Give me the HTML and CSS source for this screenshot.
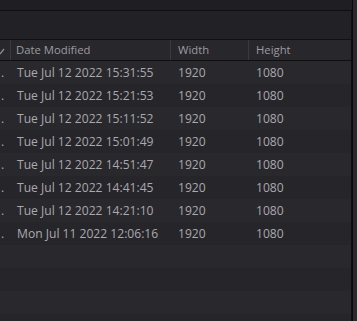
FILE: index.html
```html
<!DOCTYPE html>
<html lang="en">
<head>
    <meta charset="UTF-8">
    <title>Media Pool - List View</title>
    <link rel="stylesheet" href="styles.css">
</head>
<body>
    <div class="window">
        <div class="panel">
            <div class="topbar"></div>
            <div class="toolbar"></div>
            <div class="list">
                <div class="list-head">
                    <div class="cell col-clip">
                        <svg class="sort-icon" width="10" height="10" viewBox="0 0 10 10">
                            <path d="M1 8 L5 3" stroke="#8e8d93" stroke-width="1.3" fill="none"/>
                        </svg>
                    </div>
                    <div class="cell col-date">Date Modified</div>
                    <div class="cell col-width">Width</div>
                    <div class="cell col-height">Height</div>
                </div>
                <div class="list-body">
                    <div class="row">
                        <div class="cell col-clip">.</div>
                        <div class="cell col-date">Tue Jul 12 2022 15:31:55</div>
                        <div class="cell col-width">1920</div>
                        <div class="cell col-height">1080</div>
                    </div>
                    <div class="row">
                        <div class="cell col-clip">.</div>
                        <div class="cell col-date">Tue Jul 12 2022 15:21:53</div>
                        <div class="cell col-width">1920</div>
                        <div class="cell col-height">1080</div>
                    </div>
                    <div class="row">
                        <div class="cell col-clip">.</div>
                        <div class="cell col-date">Tue Jul 12 2022 15:11:52</div>
                        <div class="cell col-width">1920</div>
                        <div class="cell col-height">1080</div>
                    </div>
                    <div class="row">
                        <div class="cell col-clip">.</div>
                        <div class="cell col-date">Tue Jul 12 2022 15:01:49</div>
                        <div class="cell col-width">1920</div>
                        <div class="cell col-height">1080</div>
                    </div>
                    <div class="row">
                        <div class="cell col-clip">.</div>
                        <div class="cell col-date">Tue Jul 12 2022 14:51:47</div>
                        <div class="cell col-width">1920</div>
                        <div class="cell col-height">1080</div>
                    </div>
                    <div class="row">
                        <div class="cell col-clip">.</div>
                        <div class="cell col-date">Tue Jul 12 2022 14:41:45</div>
                        <div class="cell col-width">1920</div>
                        <div class="cell col-height">1080</div>
                    </div>
                    <div class="row">
                        <div class="cell col-clip">.</div>
                        <div class="cell col-date">Tue Jul 12 2022 14:21:10</div>
                        <div class="cell col-width">1920</div>
                        <div class="cell col-height">1080</div>
                    </div>
                    <div class="row">
                        <div class="cell col-clip">.</div>
                        <div class="cell col-date">Mon Jul 11 2022 12:06:16</div>
                        <div class="cell col-width">1920</div>
                        <div class="cell col-height">1080</div>
                    </div>
                </div>
            </div>
        </div>
        <div class="side-strip"></div>
    </div>
</body>
</html>
```
FILE: styles.css
```css
* {
    margin: 0;
    padding: 0;
    box-sizing: border-box;
}
html, body {
    height: 100%;
}
body {
    background-color: #1f1e23;
    font-family: "Open Sans", "Noto Sans", sans-serif;
    font-size: 12.1px;
    color: #aaa9ae;
}
.window {
    display: flex;
    height: 100%;
}
.panel {
    width: 352px;
    display: flex;
    flex-direction: column;
}
.topbar {
    height: 10px;
    background-color: #1f1e23;
}
.toolbar {
    height: 29px;
    background-color: #222126;
    border-top: 1px solid #0f0f12;
    border-right: 1px solid #0f0f12;
}
.list {
    flex: 1;
    display: flex;
    flex-direction: column;
    border-top: 1px solid #111114;
    border-right: 1px solid #0f0f12;
    background-color: #28272c;
}
.list-head {
    display: flex;
    height: 21px;
    background-color: #28272c;
    border-bottom: 1px solid #0f0f12;
    color: #9c9ba1;
    font-size: 11.3px;
}
.list-head .cell {
    border-right: 1px solid #3b3a40;
    line-height: 20px;
}
.list-head .col-height {
    border-right: none;
}
.list-body {
    flex: 1;
    background: repeating-linear-gradient(#29282d 0, #29282d 23px, #26252a 23px, #26252a 46px);
}
.row {
    display: flex;
    height: 23px;
    line-height: 23px;
}
.cell {
    white-space: nowrap;
    overflow: hidden;
}
.col-clip {
    width: 11px;
    padding-left: 1px;
}
.col-date {
    width: 160px;
    padding-left: 6px;
}
.list-head .col-date {
    padding-left: 5px;
}
.col-width {
    width: 78px;
    padding-left: 7px;
}
.col-height {
    flex: 1;
    padding-left: 7px;
}
.sort-icon {
    display: block;
    margin: 6px 0 0 -2px;
}
.side-strip {
    flex: 1;
    background-color: #2a292e;
    border-left: 1px solid #0a0a0c;
}
```
